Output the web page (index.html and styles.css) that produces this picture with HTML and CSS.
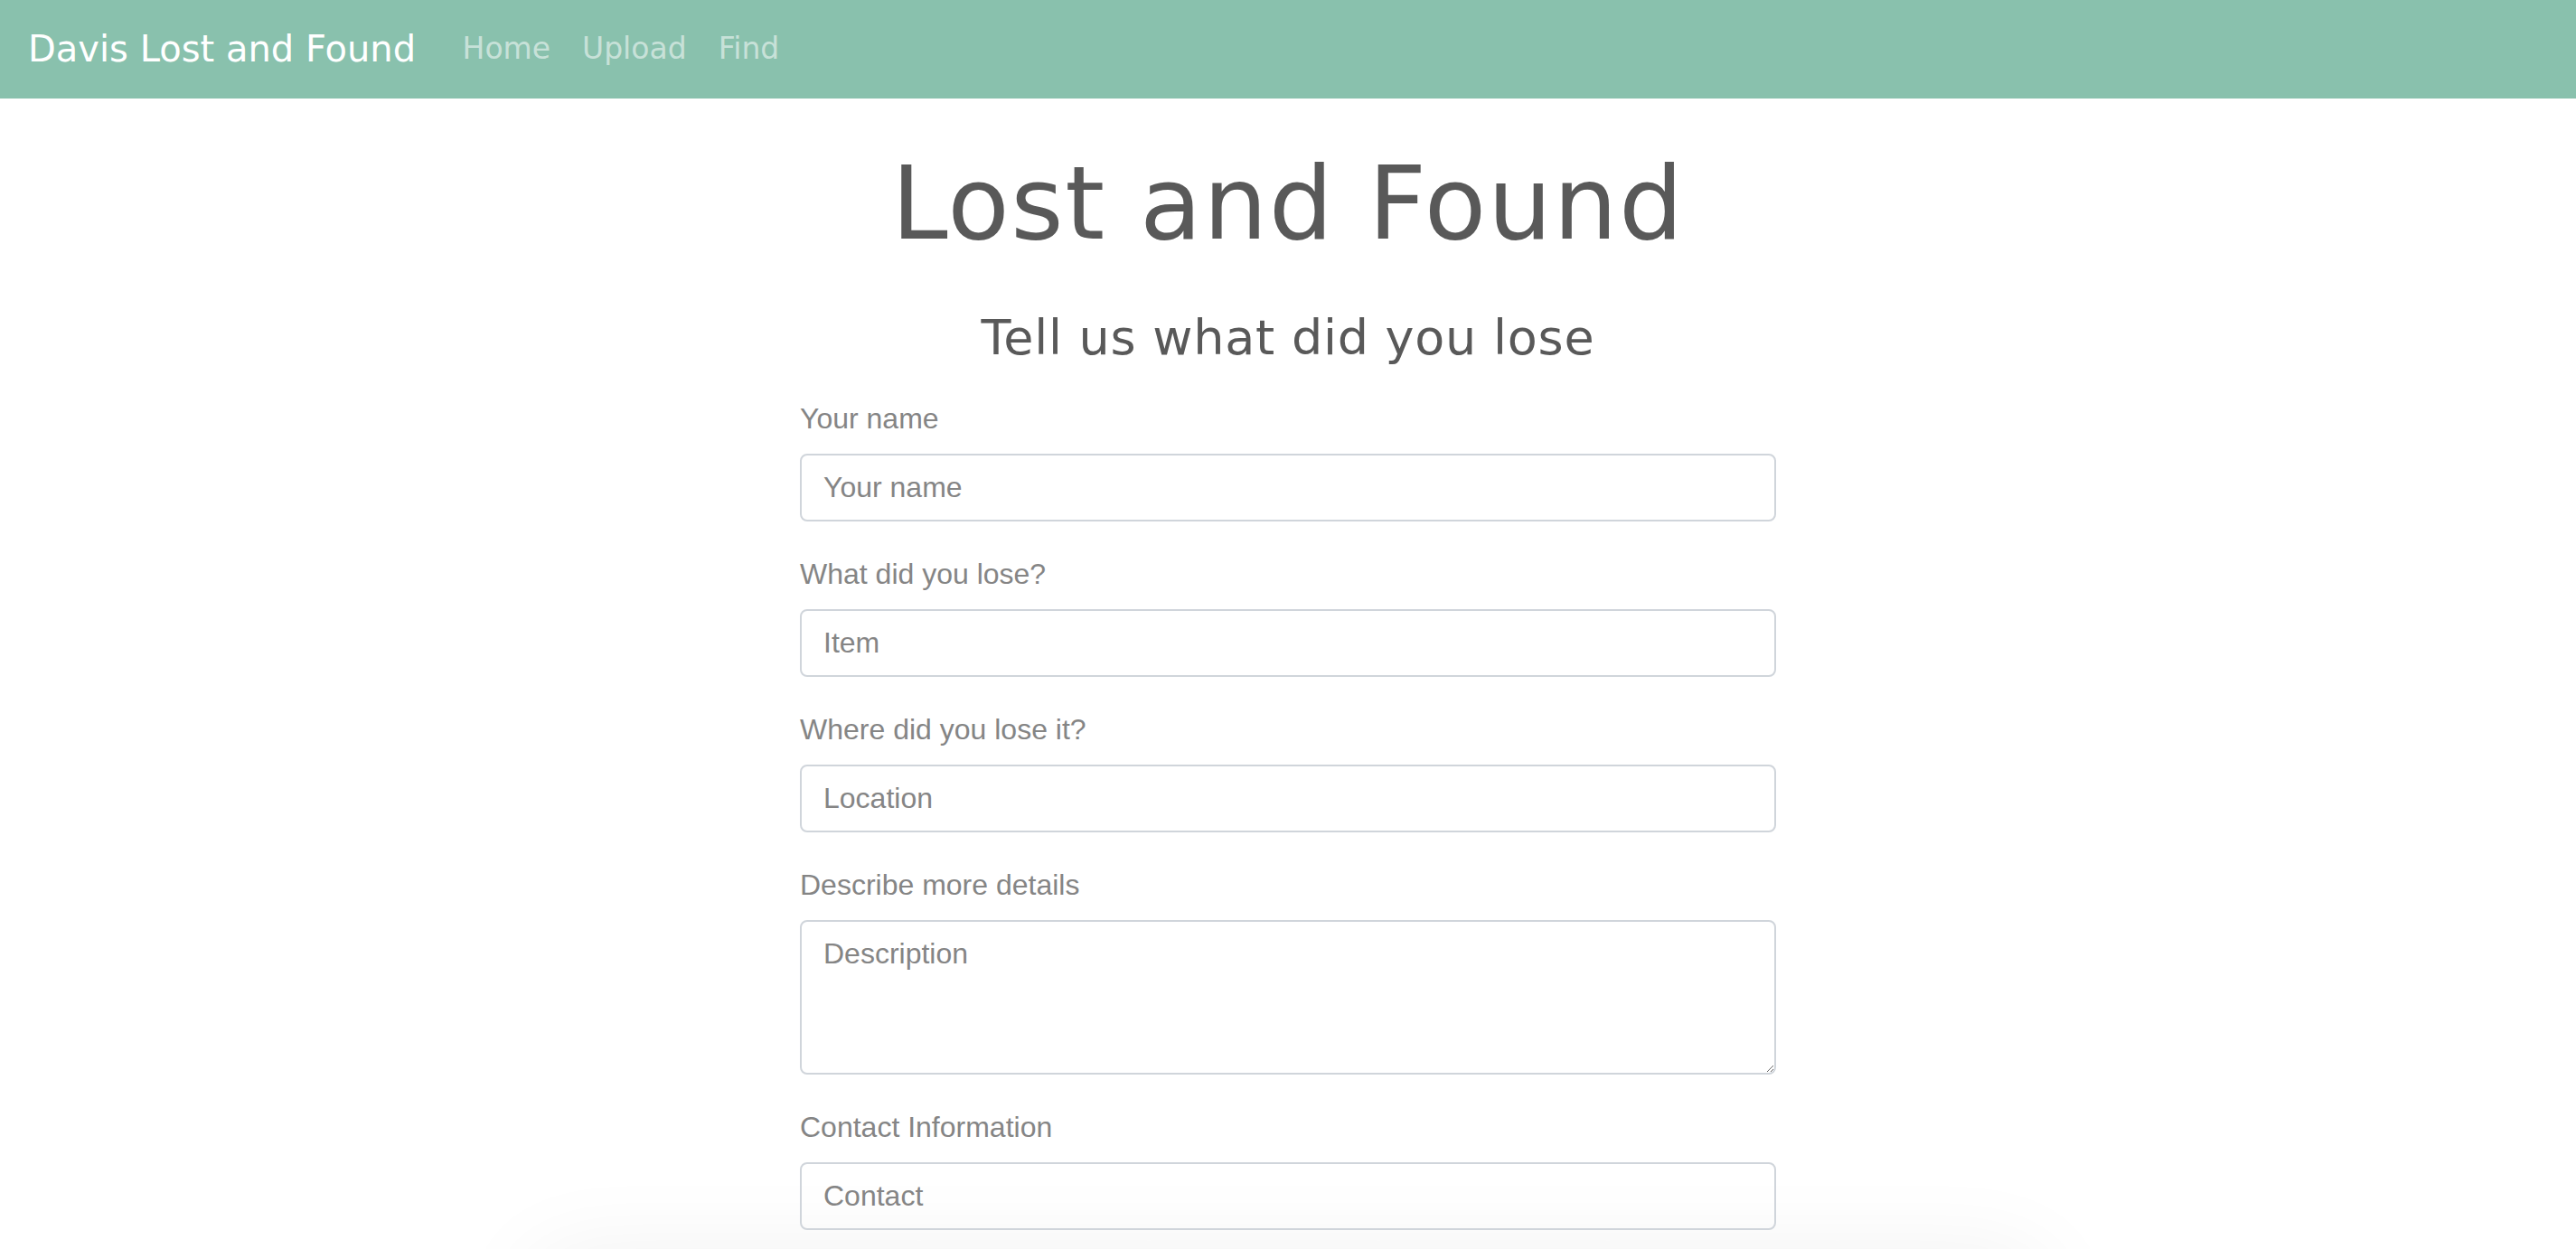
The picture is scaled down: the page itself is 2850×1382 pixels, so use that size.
FILE: index.html
```html
<!DOCTYPE html>
<html lang="en">
<head>
<meta charset="utf-8">
<title>Davis Lost and Found</title>
<link rel="stylesheet" href="styles.css">
</head>
<body>
<div class="page">
  <nav class="navbar">
    <a class="brand" href="#">Davis Lost and Found</a>
    <ul class="nav-links">
      <li><a href="#">Home</a></li>
      <li><a href="#">Upload</a></li>
      <li><a href="#">Find</a></li>
    </ul>
  </nav>
  <main class="main">
    <h1 class="title">Lost and Found</h1>
    <h3 class="subtitle">Tell us what did you lose</h3>
    <form class="form">
      <div class="group">
        <label for="name">Your name</label>
        <input id="name" class="control" type="text" placeholder="Your name">
      </div>
      <div class="group">
        <label for="item">What did you lose?</label>
        <input id="item" class="control" type="text" placeholder="Item">
      </div>
      <div class="group">
        <label for="loc">Where did you lose it?</label>
        <input id="loc" class="control" type="text" placeholder="Location">
      </div>
      <div class="group">
        <label for="desc">Describe more details</label>
        <textarea id="desc" class="control area" placeholder="Description"></textarea>
      </div>
      <div class="group">
        <label for="contact">Contact Information</label>
        <input id="contact" class="control" type="text" placeholder="Contact">
      </div>
    </form>
    <div class="card"></div>
  </main>
</div>
</body>
</html>
```

FILE: styles.css
```css
* { box-sizing: border-box; }

html, body {
  margin: 0;
  padding: 0;
  background: #ffffff;
}

.page {
  height: 100vh;
  overflow: hidden;
}

.navbar {
  height: 109px;
  background: #89c1ad;
  display: flex;
  align-items: center;
  padding: 0 31px;
  font-family: "DejaVu Sans", sans-serif;
}

.brand {
  color: #ffffff;
  font-size: 40px;
  line-height: 60px;
  text-decoration: none;
  margin-right: 34px;
  margin-top: -2px;
}

.nav-links {
  display: flex;
  list-style: none;
  margin: 0;
  padding: 0;
  margin-top: -2px;
}

.nav-links a {
  display: block;
  padding: 0 17.5px;
  font-size: 33px;
  line-height: 48px;
  color: rgba(255, 255, 255, 0.55);
  text-decoration: none;
}

.main {
  display: flex;
  flex-direction: column;
  align-items: center;
}

.title {
  margin: 49px 0 0;
  font-family: "DejaVu Sans", sans-serif;
  font-weight: 400;
  font-size: 112px;
  line-height: 134px;
  letter-spacing: 1.6px;
  color: #595959;
}

.subtitle {
  margin: 49px 0 0;
  font-family: "DejaVu Sans", sans-serif;
  font-weight: 400;
  font-size: 54px;
  line-height: 65px;
  letter-spacing: 0.75px;
  color: #595959;
}

.form {
  position: relative;
  z-index: 1;
  width: 1080px;
  margin-top: 34px;
  font-family: "Liberation Sans", Arial, sans-serif;
}

.group {
  display: flex;
  flex-direction: column;
  margin-bottom: 35px;
}

.group label {
  font-size: 32px;
  line-height: 46px;
  color: #858585;
  margin-bottom: 16px;
}

.control {
  width: 100%;
  height: 75px;
  border: 2px solid #d0d5db;
  border-radius: 8px;
  padding: 12px 24px;
  font-family: "Liberation Sans", Arial, sans-serif;
  font-size: 32px;
  line-height: 47px;
  color: #495057;
  background: transparent;
  outline: none;
}

.control::placeholder {
  color: #858585;
  opacity: 1;
}

.area {
  height: 171px;
  resize: vertical;
  display: block;
}

.card {
  width: 1660px;
  height: 300px;
  flex-shrink: 0;
  background: #ffffff;
  box-shadow: 0 0 110px rgba(0, 0, 0, 0.07);
  border-radius: 16px;
}
```
